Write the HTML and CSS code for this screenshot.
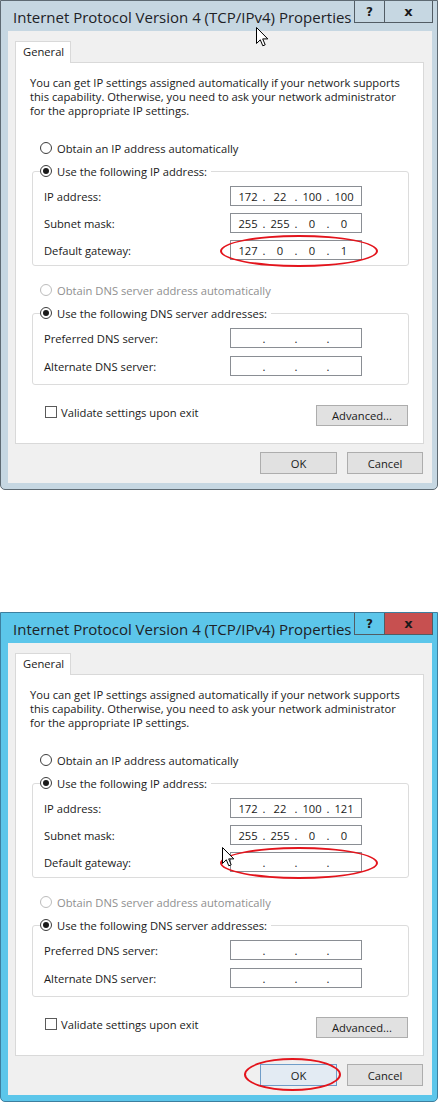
FILE: index.html
```html
<!DOCTYPE html>
<html>
<head>
<meta charset="utf-8">
<link rel="stylesheet" href="styles.css">
</head>
<body>
<div class="page">

  <section class="dialog inactive">
    <header class="titlebar">
      <span class="title">Internet Protocol Version 4 (TCP/IPv4) Properties</span>
      <div class="caption">
        <span class="cbtn help">?</span>
        <span class="cbtn close">x</span>
      </div>
    </header>
    <div class="client">
      <div class="tabs"><span class="tab">General</span></div>
      <div class="panel">
        <p class="intro">You can get IP settings assigned automatically if your network supports<br>this capability. Otherwise, you need to ask your network administrator<br>for the appropriate IP settings.</p>
        <div class="radio opt"><span class="rb"></span><span>Obtain an IP address automatically</span></div>
        <fieldset class="group">
          <legend class="radio"><span class="rb on"></span><span>Use the following IP address:</span></legend>
          <div class="row"><span class="lbl">IP address:</span><span class="ip"><span class="seg">172</span><span class="dot">.</span><span class="seg">22</span><span class="dot">.</span><span class="seg">100</span><span class="dot">.</span><span class="seg">100</span></span></div>
          <div class="row"><span class="lbl">Subnet mask:</span><span class="ip"><span class="seg">255</span><span class="dot">.</span><span class="seg">255</span><span class="dot">.</span><span class="seg">0</span><span class="dot">.</span><span class="seg">0</span></span></div>
          <div class="row"><span class="lbl">Default gateway:</span><span class="ip"><span class="seg">127</span><span class="dot">.</span><span class="seg">0</span><span class="dot">.</span><span class="seg">0</span><span class="dot">.</span><span class="seg">1</span></span></div>
        </fieldset>
        <div class="radio opt opt-dns disabled"><span class="rb"></span><span>Obtain DNS server address automatically</span></div>
        <fieldset class="group group-dns">
          <legend class="radio"><span class="rb on"></span><span>Use the following DNS server addresses:</span></legend>
          <div class="row"><span class="lbl">Preferred DNS server:</span><span class="ip"><span class="seg"></span><span class="dot">.</span><span class="seg"></span><span class="dot">.</span><span class="seg"></span><span class="dot">.</span><span class="seg"></span></span></div>
          <div class="row"><span class="lbl">Alternate DNS server:</span><span class="ip"><span class="seg"></span><span class="dot">.</span><span class="seg"></span><span class="dot">.</span><span class="seg"></span><span class="dot">.</span><span class="seg"></span></span></div>
        </fieldset>
        <div class="bottom">
          <div class="check"><span class="cb"></span><span>Validate settings upon exit</span></div>
          <span class="btn adv">Advanced...</span>
        </div>
      </div>
      <div class="footer">
        <span class="btn ok">OK</span>
        <span class="btn cancel">Cancel</span>
      </div>
    </div>
    <span class="mark mark-gw"></span>
    <svg class="cursor cursor-1" width="13" height="21" viewBox="0 0 13 21"><path d="M0.5 0.5 L0.5 16.5 L4.3 12.8 L6.8 18.8 L9.2 17.8 L6.7 11.9 L11.8 11.9 Z" fill="#fff" stroke="#000" stroke-width="1" stroke-linejoin="miter"/></svg>
  </section>

  <section class="dialog active">
    <header class="titlebar">
      <span class="title">Internet Protocol Version 4 (TCP/IPv4) Properties</span>
      <div class="caption">
        <span class="cbtn help">?</span>
        <span class="cbtn close">x</span>
      </div>
    </header>
    <div class="client">
      <div class="tabs"><span class="tab">General</span></div>
      <div class="panel">
        <p class="intro">You can get IP settings assigned automatically if your network supports<br>this capability. Otherwise, you need to ask your network administrator<br>for the appropriate IP settings.</p>
        <div class="radio opt"><span class="rb"></span><span>Obtain an IP address automatically</span></div>
        <fieldset class="group">
          <legend class="radio"><span class="rb on"></span><span>Use the following IP address:</span></legend>
          <div class="row"><span class="lbl">IP address:</span><span class="ip"><span class="seg">172</span><span class="dot">.</span><span class="seg">22</span><span class="dot">.</span><span class="seg">100</span><span class="dot">.</span><span class="seg">121</span></span></div>
          <div class="row"><span class="lbl">Subnet mask:</span><span class="ip"><span class="seg">255</span><span class="dot">.</span><span class="seg">255</span><span class="dot">.</span><span class="seg">0</span><span class="dot">.</span><span class="seg">0</span></span></div>
          <div class="row"><span class="lbl">Default gateway:</span><span class="ip"><span class="seg"></span><span class="dot">.</span><span class="seg"></span><span class="dot">.</span><span class="seg"></span><span class="dot">.</span><span class="seg"></span></span></div>
        </fieldset>
        <div class="radio opt opt-dns disabled"><span class="rb"></span><span>Obtain DNS server address automatically</span></div>
        <fieldset class="group group-dns">
          <legend class="radio"><span class="rb on"></span><span>Use the following DNS server addresses:</span></legend>
          <div class="row"><span class="lbl">Preferred DNS server:</span><span class="ip"><span class="seg"></span><span class="dot">.</span><span class="seg"></span><span class="dot">.</span><span class="seg"></span><span class="dot">.</span><span class="seg"></span></span></div>
          <div class="row"><span class="lbl">Alternate DNS server:</span><span class="ip"><span class="seg"></span><span class="dot">.</span><span class="seg"></span><span class="dot">.</span><span class="seg"></span><span class="dot">.</span><span class="seg"></span></span></div>
        </fieldset>
        <div class="bottom">
          <div class="check"><span class="cb"></span><span>Validate settings upon exit</span></div>
          <span class="btn adv">Advanced...</span>
        </div>
      </div>
      <div class="footer">
        <span class="btn ok hot">OK</span>
        <span class="btn cancel">Cancel</span>
      </div>
    </div>
    <span class="mark mark-gw"></span>
    <span class="mark mark-ok"></span>
    <svg class="cursor cursor-2" width="13" height="21" viewBox="0 0 13 21"><path d="M0.5 0.5 L0.5 16.5 L4.3 12.8 L6.8 18.8 L9.2 17.8 L6.7 11.9 L11.8 11.9 Z" fill="#fff" stroke="#000" stroke-width="1" stroke-linejoin="miter"/></svg>
  </section>

</div>
</body>
</html>
```
FILE: styles.css
```css
* { box-sizing: border-box; }

body {
  margin: 0;
  background: #ffffff;
  font-family: "Open Sans", "Noto Sans", sans-serif;
  font-size: 11.2px;
  color: #1a1a1a;
}

.page {
  display: flex;
  flex-direction: column;
  gap: 122px;
  width: 440px;
}

.dialog {
  position: relative;
  width: 438px;
  height: 490px;
  border: 1px solid #5e6a73;
  border-radius: 0 0 5px 5px;
  background: #c6d7e2;
  display: flex;
  flex-direction: column;
}

.dialog.active {
  background: #5cc6ea;
  border-color: #3d7f9f;
}

.titlebar {
  height: 30px;
  display: flex;
  align-items: flex-start;
  justify-content: space-between;
}

.title {
  font-size: 15px;
  line-height: 32px;
  padding-left: 12px;
  color: #1e2226;
  white-space: nowrap;
}

.caption {
  display: flex;
  margin-right: 4px;
}

.cbtn {
  height: 22px;
  border: 1px solid #525c64;
  border-top: none;
  display: flex;
  align-items: center;
  justify-content: center;
  font-family: "DejaVu Sans", sans-serif;
  font-weight: bold;
  font-size: 12px;
  color: #1a1a1a;
}

.help { width: 31px; }

.close {
  width: 48px;
  border-left: none;
  font-size: 13px;
}

.active .close { background: #c75050; }

.client {
  margin: 0 5px 0 7px;
  height: 452px;
  background: #f0f0f0;
  padding: 10px 8px 0 7px;
  display: flex;
  flex-direction: column;
}

.tabs {
  display: flex;
  height: 21px;
}

.tab {
  position: relative;
  z-index: 1;
  width: 56px;
  height: 22px;
  background: #ffffff;
  border: 1px solid #d9d9d9;
  border-bottom: none;
  padding-left: 7px;
  line-height: 20px;
}

.panel {
  height: 382px;
  background: #ffffff;
  border: 1px solid #d9d9d9;
  padding-top: 13px;
}

.intro {
  margin: 0 0 0 14px;
  line-height: 14px;
  white-space: nowrap;
}

.radio {
  display: flex;
  align-items: center;
  gap: 5px;
  height: 16px;
  white-space: nowrap;
}

.opt { margin: 22px 0 0 24px; }
.opt-dns { margin-top: 16px; }

.disabled { color: #8f8f8f; }
.disabled .rb { border-color: #bcbcbc; }

.rb {
  width: 12px;
  height: 12px;
  border-radius: 50%;
  border: 1px solid #3c3c3c;
  background: #ffffff;
  display: flex;
  align-items: center;
  justify-content: center;
  flex: none;
}

.rb.on::after {
  content: "";
  width: 6px;
  height: 6px;
  border-radius: 50%;
  background: #1a1a1a;
}

.group {
  min-width: 0;
  margin: 7px 14px 0 16px;
  border: 1px solid #dcdcdc;
  border-radius: 3px;
  padding: 0 0 5px 7px;
}

.group legend {
  padding: 0 4px 0 0;
}

.group-dns { padding-bottom: 8px; }
.group-dns .row + .row { margin-top: 8px; }

.row {
  display: flex;
  align-items: center;
  height: 20px;
  margin-top: 7px;
  padding-left: 4px;
}

.lbl {
  width: 186px;
  flex: none;
}

.ip {
  width: 132px;
  height: 20px;
  border: 1px solid #8a8e94;
  background: #ffffff;
  display: flex;
  align-items: center;
  padding-left: 4px;
}

.seg {
  width: 26px;
  text-align: center;
}

.dot {
  width: 6px;
  text-align: center;
}

.bottom {
  display: flex;
  justify-content: space-between;
  align-items: flex-start;
  margin: 20px 15px 0 29px;
}

.check {
  display: flex;
  align-items: center;
  gap: 4px;
  height: 14px;
}

.cb {
  width: 12px;
  height: 12px;
  border: 1px solid #5a5a5a;
  background: #ffffff;
}

.btn {
  height: 22px;
  border: 1px solid #adadad;
  background: #e1e1e1;
  display: flex;
  align-items: center;
  justify-content: center;
  color: #1a1a1a;
}

.adv { width: 92px; height: 21px; }

.footer {
  display: flex;
  justify-content: flex-end;
  gap: 10px;
  margin-top: 8px;
  padding-right: 1px;
}

.ok { width: 77px; }
.cancel { width: 76px; }

.ok.hot {
  border-color: #6f9cc8;
  background: #e3ebf3;
}

.mark {
  position: absolute;
  border: 2px solid #e3141c;
  border-radius: 50%;
}

.mark-gw {
  left: 219px;
  top: 234px;
  width: 158px;
  height: 32px;
}

.mark-ok {
  left: 243px;
  top: 445px;
  width: 97px;
  height: 33px;
}

.cursor { position: absolute; }

.cursor-1 { left: 255px; top: 26px; }
.cursor-2 { left: 221px; top: 234px; }
```
